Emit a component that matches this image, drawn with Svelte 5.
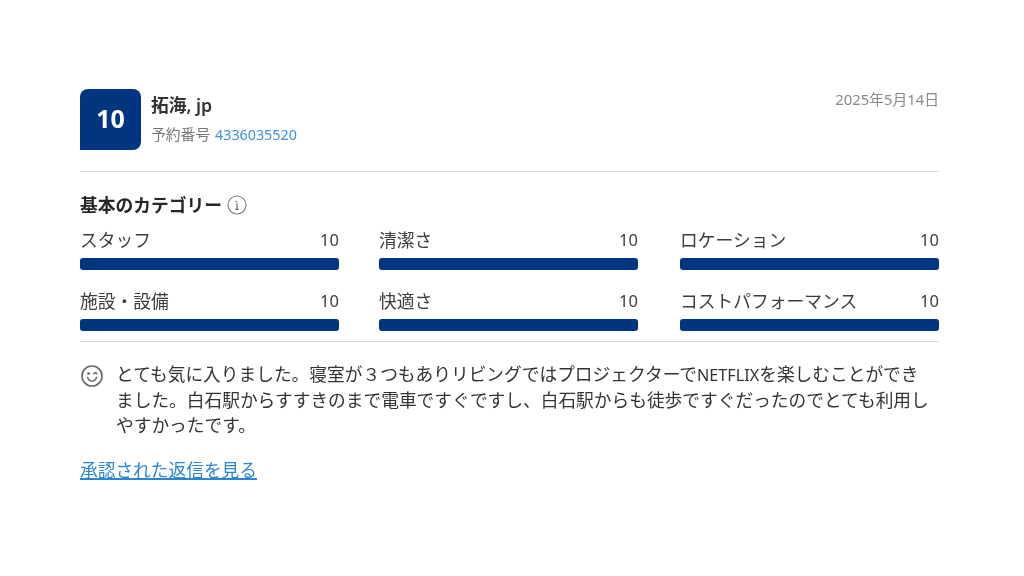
<script>
	const scores = [
		{ label: 'スタッフ', value: 10 },
		{ label: '清潔さ', value: 10 },
		{ label: 'ロケーション', value: 10 },
		{ label: '施設・設備', value: 10 },
		{ label: '快適さ', value: 10 },
		{ label: 'コストパフォーマンス', value: 10 }
	];
</script>

<main class="review">
	<header class="head">
		<div class="badge">10</div>
		<div class="who">
			<div class="name">拓海, jp</div>
			<div class="booking">予約番号 <span class="booking-no">4336035520</span></div>
		</div>
		<div class="date">2025年5月14日</div>
	</header>

	<section class="cats">
		<h2 class="cats-title">
			基本のカテゴリー
			<svg class="info" viewBox="0 0 20 20" width="20" height="20" aria-hidden="true">
				<circle cx="10" cy="10" r="9" fill="none" stroke="#7d7d7d" stroke-width="1.1" />
				<path d="M8.6 6.6h1.5M10 8.2v6.2M8.4 14.4h3.2" fill="none" stroke="#6b6b6b" stroke-width="1.2" />
			</svg>
		</h2>
		<div class="grid">
			{#each scores as s}
				<div class="score">
					<div class="score-top">
						<span>{s.label}</span>
						<span class="score-value">{s.value}</span>
					</div>
					<div class="bar"><div class="fill" style="width: {s.value * 10}%"></div></div>
				</div>
			{/each}
		</div>
	</section>

	<section class="comment">
		<svg class="smile" viewBox="0 0 24 24" width="24" height="24" aria-hidden="true">
			<circle cx="12" cy="12" r="10" fill="none" stroke="#666" stroke-width="1.6" />
			<path d="M7.6 13.6c1 2.6 2.6 3.6 4.4 3.6s3.6-1 4.6-3.6" fill="none" stroke="#666" stroke-width="1.5" stroke-linecap="round" />
			<circle cx="8.6" cy="9.6" r="1.4" fill="#666" />
			<path d="M13.8 9.8c.8-1.3 2.2-1.3 3 0" fill="none" stroke="#666" stroke-width="1.5" stroke-linecap="round" />
		</svg>
		<p>とても気に入りました。寝室が３つもありリビングではプロジェクターで<span class="latin">NETFLIX</span>を楽しむことができました。白石駅からすすきのまで電車ですぐですし、白石駅からも徒歩ですぐだったのでとても利用しやすかったです。</p>
	</section>

	<a class="reply" href="#reply">承認された返信を見る</a>
</main>

<style>
	:global(body) {
		background: #fff;
	}

	.review {
		width: 859px;
		margin-left: 80px;
		padding-top: 89px;
		font-family: "Noto Sans", "Noto Sans CJK JP", sans-serif;
		color: #333;
		filter: blur(0.4px);
	}

	.head {
		display: flex;
		padding-bottom: 21px;
		border-bottom: 1px solid #dcdcdc;
	}

	.badge {
		width: 61px;
		height: 61px;
		flex: none;
		display: flex;
		align-items: center;
		justify-content: center;
		padding-bottom: 3px;
		box-sizing: border-box;
		background: #003580;
		color: #fff;
		font-size: 25px;
		font-weight: 700;
		border-radius: 8px 8px 8px 0;
	}

	.who {
		flex: 1;
		margin-left: 10px;
	}

	.name {
		font-size: 17.76px;
		font-weight: 600;
		line-height: 24px;
		margin-top: 4px;
	}

	.booking {
		font-size: 14.8px;
		line-height: 20px;
		margin-top: 7px;
		color: #777;
	}

	.booking-no {
		margin-left: 1px;
		font-size: 14.3px;
		color: #3d93d6;
	}

	.date {
		font-size: 14.8px;
		line-height: 20px;
		color: #8a8a8a;
	}

	.cats {
		padding: 22px 0 10px;
		border-bottom: 1px solid #dcdcdc;
	}

	.cats-title {
		display: flex;
		align-items: center;
		gap: 5px;
		margin: 0;
		font-size: 17.76px;
		font-weight: 700;
		line-height: 22px;
		color: #262626;
	}

	.grid {
		display: grid;
		grid-template-columns: 299px 301px 259px;
		row-gap: 19px;
		margin-top: 12px;
	}

	.score {
		width: 259px;
	}

	.score-top {
		display: flex;
		justify-content: space-between;
		font-size: 17.76px;
		line-height: 24px;
		color: #3c3c3c;
	}

	.score-value {
		font-size: 16.5px;
	}

	.bar {
		height: 12px;
		margin-top: 6px;
		border-radius: 3px;
		background: #e6e6e6;
	}

	.fill {
		height: 100%;
		border-radius: 3px;
		background: #003580;
	}

	.comment {
		display: flex;
		gap: 12px;
		margin-top: 20px;
	}

	.smile {
		flex: none;
		margin: 2px 0 0;
	}

	.comment p {
		margin: 0;
		width: 816px;
		font-size: 17.72px;
		line-height: 25px;
		color: #333;
	}

	.latin {
		font-size: 16.2px;
	}

	.reply {
		display: inline-block;
		margin-top: 20px;
		font-size: 17.7px;
		line-height: 24px;
		color: #2a86d1;
		text-decoration: underline;
		text-decoration-thickness: 1.5px;
	}
</style>
